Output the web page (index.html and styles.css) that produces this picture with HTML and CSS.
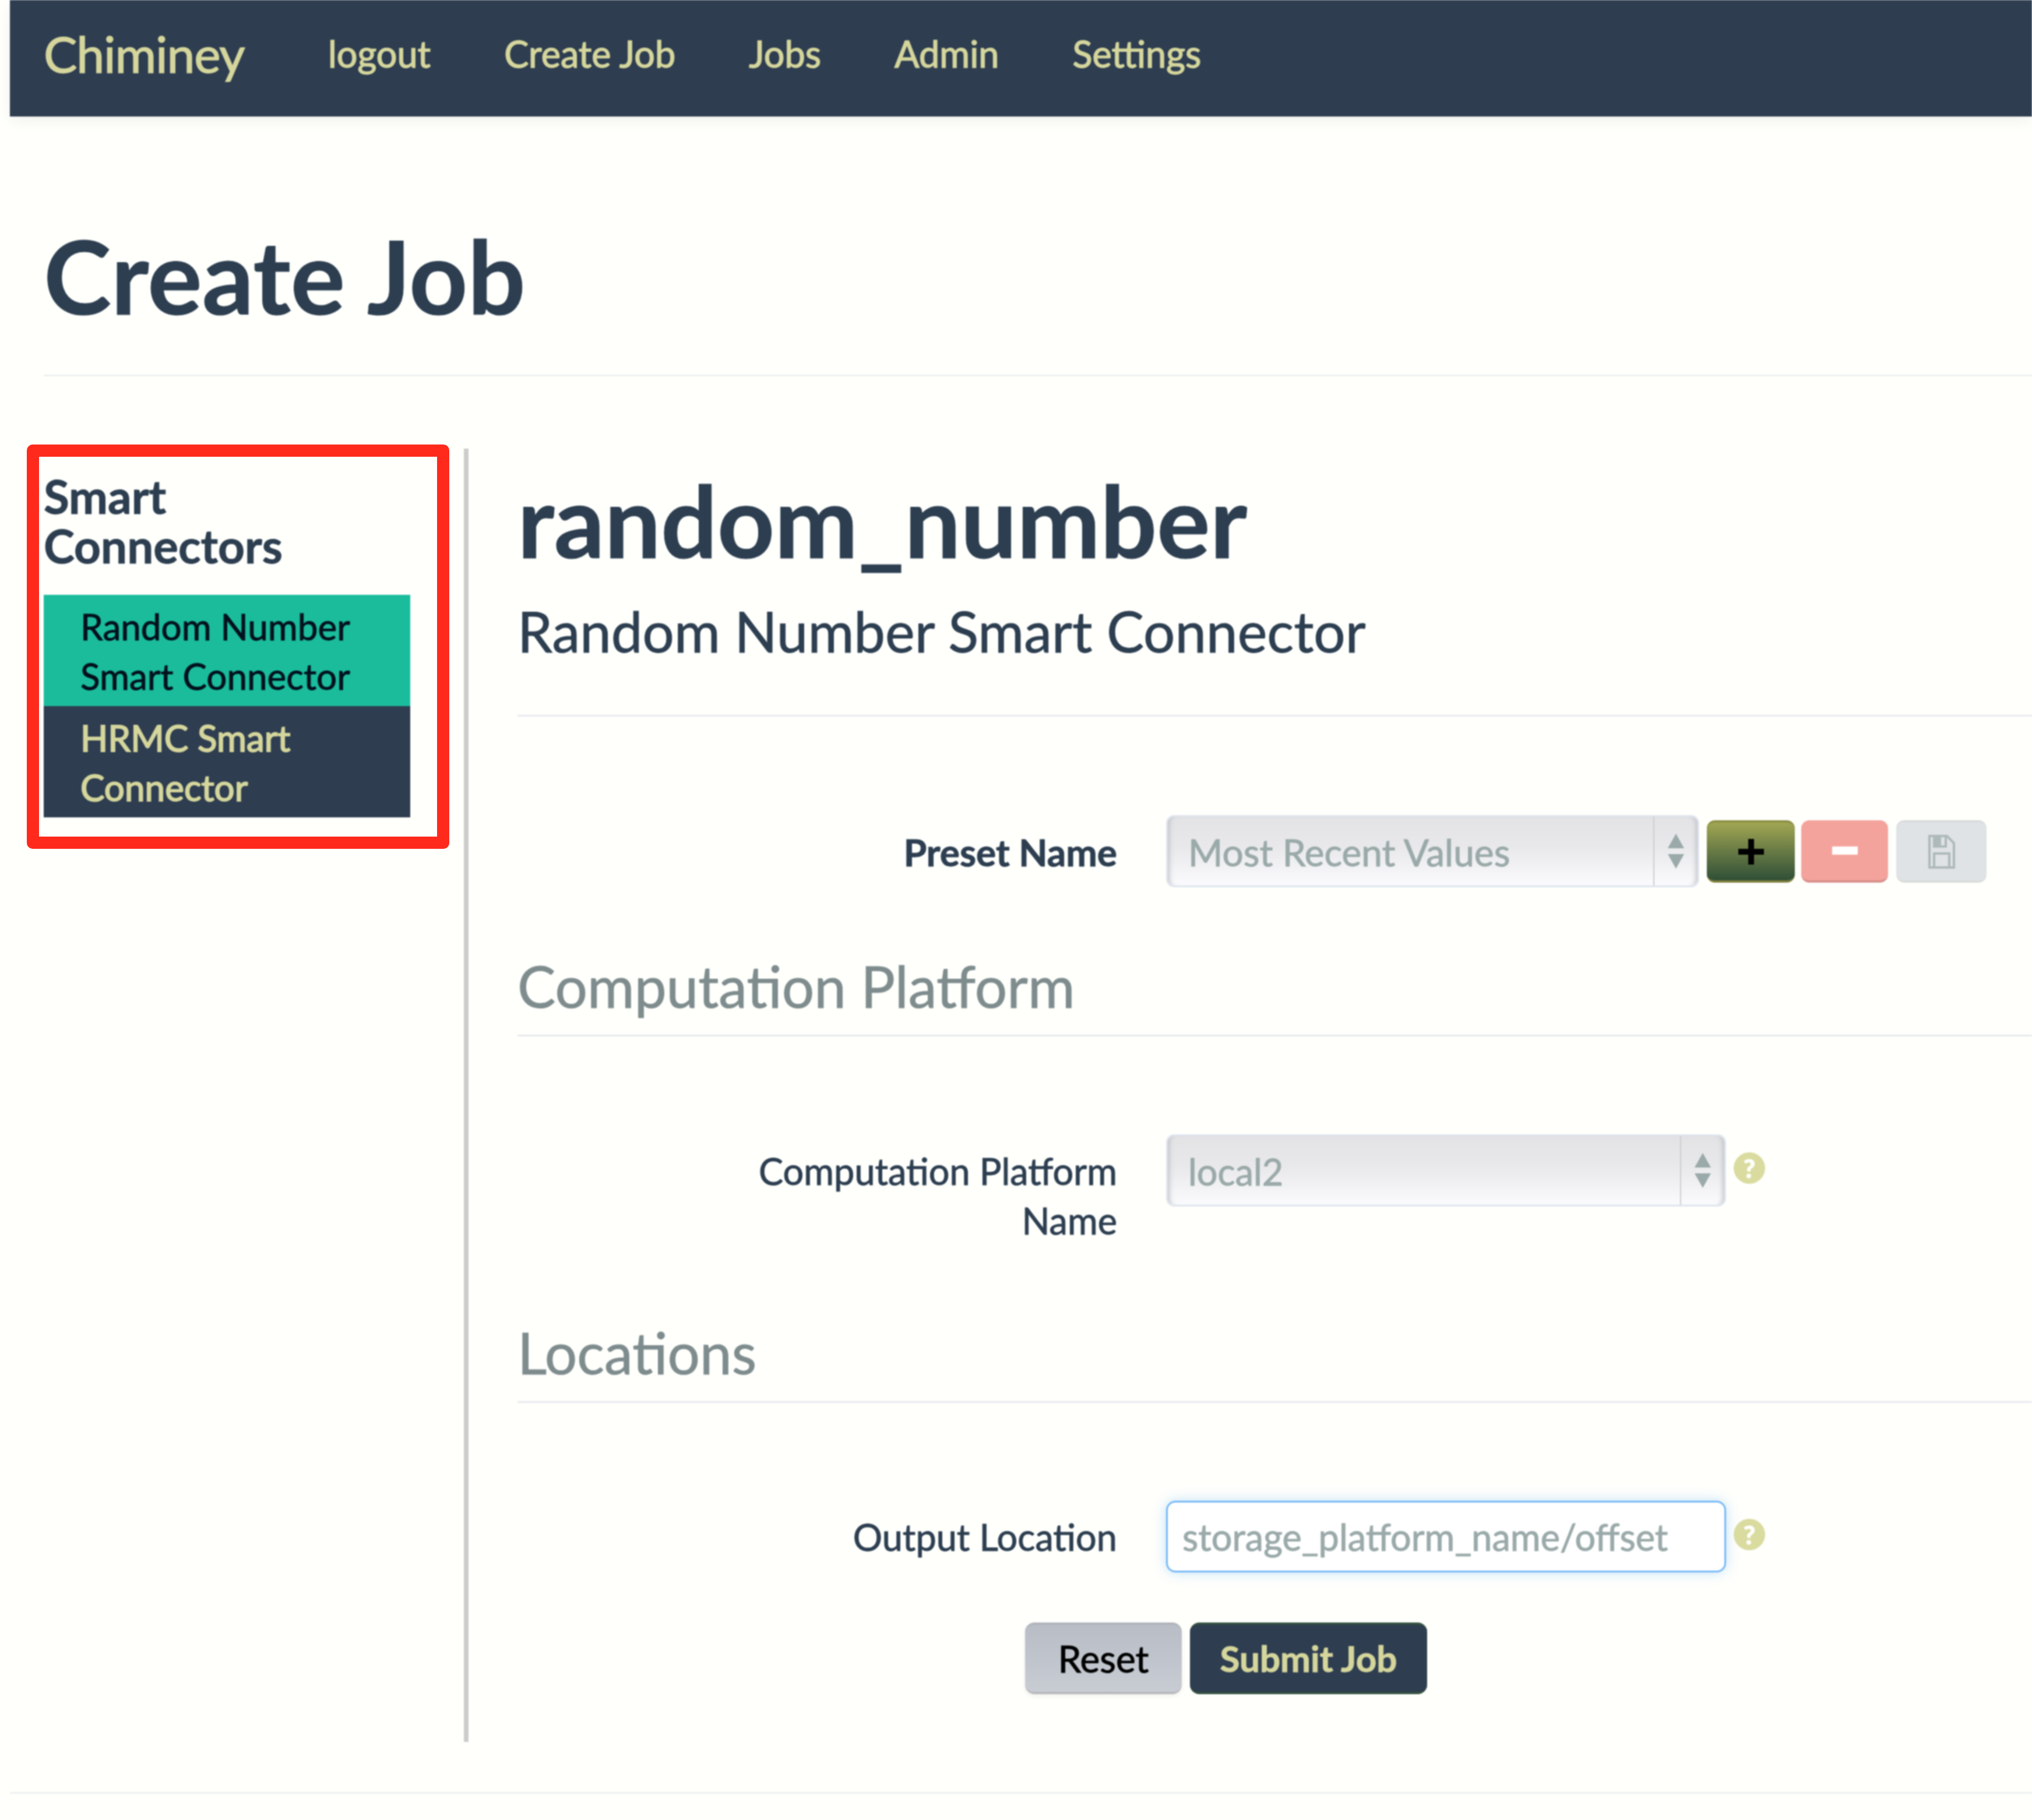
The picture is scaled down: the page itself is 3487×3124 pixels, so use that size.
FILE: index.html
```html
<!DOCTYPE html>
<html lang="en">
<head>
    <meta charset="UTF-8">
    <title>Chiminey - Create Job</title>
    <link rel="stylesheet" href="styles.css">
</head>
<body>
    <div class="wrapper">
        <nav class="navbar">
            <a class="brand">Chiminey</a>
            <a class="nav-link">logout</a>
            <a class="nav-link">Create Job</a>
            <a class="nav-link">Jobs</a>
            <a class="nav-link">Admin</a>
            <a class="nav-link">Settings</a>
        </nav>
        <div class="page-header">
            <h1>Create Job</h1>
        </div>
        <div class="columns">
            <aside class="sidebar">
                <h4>Smart Connectors</h4>
                <ul class="menu">
                    <li class="active">Random Number Smart Connector</li>
                    <li>HRMC Smart Connector</li>
                </ul>
            </aside>
            <main class="content">
                <div class="job-header">
                    <h1 class="job-name">random_number</h1>
                    <h2 class="job-desc">Random Number Smart Connector</h2>
                </div>
                <div class="row preset-row">
                    <label class="bold">Preset Name</label>
                    <div class="select select-preset">
                        <span class="select-value">Most Recent Values</span>
                        <span class="select-arrows">
                            <svg width="28" height="60" viewBox="0 0 28 60"><path d="M14 0L28 25H0ZM14 60L0 35H28Z" fill="#9aa9a9"/></svg>
                        </span>
                    </div>
                    <button class="icon-btn btn-add">
                        <svg width="44" height="44" viewBox="0 0 44 44"><path d="M17 0H27V17H44V27H27V44H17V27H0V17H17Z" fill="#000"/></svg>
                    </button>
                    <button class="icon-btn btn-remove">
                        <svg width="44" height="14" viewBox="0 0 44 14"><rect width="44" height="14" fill="#fff"/></svg>
                    </button>
                    <button class="icon-btn btn-save">
                        <svg width="46" height="58" viewBox="0 0 46 58"><path d="M2 2H32L44 14V56H2ZM10 2V20H30V2M10 56V32H36V56" fill="none" stroke="#aeb9b9" stroke-width="4"/><rect x="12" y="4" width="10" height="14" fill="#aeb9b9"/></svg>
                    </button>
                </div>
                <h3>Computation Platform</h3>
                <div class="row platform-row">
                    <label>Computation Platform Name</label>
                    <div class="select select-platform">
                        <span class="select-value">local2</span>
                        <span class="select-arrows">
                            <svg width="28" height="60" viewBox="0 0 28 60"><path d="M14 0L28 25H0ZM14 60L0 35H28Z" fill="#9aa9a9"/></svg>
                        </span>
                    </div>
                    <span class="help">?</span>
                </div>
                <h3 class="locations">Locations</h3>
                <div class="row location-row">
                    <label>Output Location</label>
                    <div class="text-input">storage_platform_name/offset</div>
                    <span class="help">?</span>
                </div>
                <div class="actions">
                    <button class="btn btn-reset">Reset</button>
                    <button class="btn btn-submit">Submit Job</button>
                </div>
            </main>
        </div>
        <div class="footer-line"></div>
    </div>
    <div class="highlight"></div>
</body>
</html>
```

FILE: styles.css
```css
html, body {
    margin: 0;
    padding: 0;
}
body {
    width: 3487px;
    height: 3124px;
    overflow: hidden;
    position: relative;
    background: #fffffc;
    font-family: 'Lato', sans-serif;
    font-size: 63px;
    line-height: 85px;
    color: #2c3e50;
    -webkit-text-stroke: 1px currentColor;
}
.wrapper {
    padding-left: 17px;
    filter: blur(0.8px);
}
.navbar {
    display: flex;
    align-items: center;
    box-sizing: border-box;
    height: 200px;
    padding-left: 58px;
    padding-bottom: 18px;
    background: #2e3d50;
    box-shadow: 0 8px 24px rgba(0, 0, 0, 0.06);
    color: #d5d69c;
    -webkit-text-stroke: 1.5px currentColor;
}
.brand {
    font-size: 86px;
    letter-spacing: -1.2px;
    width: 488px;
}
.nav-link {
    margin-right: 126px;
}
.page-header {
    margin-left: 58px;
    padding-bottom: 71px;
    border-bottom: 3px solid #ecf0f1;
}
.page-header h1 {
    margin: 172px 0 0;
    font-size: 175px;
    line-height: 200px;
    font-weight: 700;
}
.columns {
    display: flex;
    margin-top: 124px;
    margin-left: 58px;
    height: 2220px;
}
.sidebar {
    width: 721px;
    flex-shrink: 0;
    border-right: 8px solid #cccccc;
}
.sidebar h4 {
    width: 500px;
    margin: 39px 0 42px;
    font-size: 80px;
    line-height: 85px;
    font-weight: 700;
}
.menu {
    list-style: none;
    margin: 0;
    padding: 0;
    width: 629px;
    font-size: 62px;
}
.menu li {
    height: 170px;
    padding: 12px 60px 9px 63px;
    background: #2e3d50;
    color: #d5d69c;
    -webkit-text-stroke: 2px currentColor;
}
.menu li.active {
    background: #1abc9c;
    color: #00101c;
    -webkit-text-stroke: 1px currentColor;
}
.content {
    flex: 1;
    padding-left: 84px;
}
.job-header {
    padding-top: 22px;
    border-bottom: 3px solid #e6e9ee;
    height: 435px;
}
.job-name {
    margin: 0;
    font-size: 171px;
    line-height: 200px;
}
.job-desc {
    margin: 31px 0 0;
    font-size: 96px;
    line-height: 120px;
    font-weight: 400;
}
.row {
    display: flex;
    align-items: flex-start;
}
.row label {
    width: 720px;
    margin-left: 309px;
    margin-right: 84px;
    text-align: right;
    flex-shrink: 0;
}
.row .bold {
    font-weight: 700;
    font-size: 64px;
}
.preset-row {
    margin-top: 169px;
}
.preset-row label {
    line-height: 128px;
}
.platform-row {
    margin-top: 168px;
}
.platform-row label {
    padding-top: 20px;
}
.location-row {
    margin-top: 168px;
}
.location-row label {
    line-height: 123px;
}
.select {
    display: flex;
    box-sizing: border-box;
    height: 124px;
    border: 3px solid #e0e6ef;
    border-radius: 14px;
    background: linear-gradient(#e3e3e5, #e9e9eb 45%, #fbfbfd);
    box-shadow: inset 10px 0 10px -8px #b9bcc2, inset -10px 0 10px -8px #b9bcc2;
    color: #9aa9a9;
}
.select-preset {
    width: 915px;
}
.select-preset .select-value {
    font-size: 64px;
}
.select-platform {
    width: 961px;
}
.select-value {
    flex: 1;
    padding-left: 35px;
    line-height: 122px;
}
.select-arrows {
    display: flex;
    align-items: center;
    justify-content: center;
    width: 74px;
    border-left: 2px solid #c8cccc;
}
.icon-btn {
    display: flex;
    align-items: center;
    justify-content: center;
    box-sizing: border-box;
    height: 107px;
    margin-top: 9px;
    padding: 0;
    border: 0;
    border-radius: 14px;
}
.btn-add {
    width: 151px;
    margin-left: 13px;
    background: linear-gradient(#a1a653, #2f4f37);
    border-top: 4px solid #8c8f43;
    border-bottom: 4px solid #7c7f3c;
}
.btn-remove {
    width: 149px;
    margin-left: 11px;
    background: #f4a39c;
    border-bottom: 4px solid #d78f89;
}
.btn-save {
    width: 155px;
    margin-left: 14px;
    background: #dfe3e5;
    border-top: 3px solid #d5d9d9;
    border-bottom: 3px solid #d9dad8;
}
h3 {
    margin: 0;
    padding-bottom: 24px;
    font-size: 98px;
    line-height: 120px;
    font-weight: 400;
    color: #7e8c8d;
    border-bottom: 3px solid #e6e9ee;
}
.preset-row + h3 {
    margin-top: 105px;
}
.locations {
    margin-top: 124px;
}
.help {
    display: flex;
    align-items: center;
    justify-content: center;
    width: 54px;
    height: 54px;
    margin: 31px 0 0 13px;
    border-radius: 50%;
    background: #d9db9f;
    color: #fffffc;
    font-size: 44px;
    line-height: 54px;
    font-weight: 900;
}
.text-input {
    box-sizing: border-box;
    width: 961px;
    height: 123px;
    padding-left: 25px;
    border: 3px solid #74b8f5;
    border-radius: 16px;
    background: #fff;
    box-shadow: 0 0 22px rgba(100, 180, 245, 0.4);
    color: #9aa9a9;
    line-height: 117px;
}
.actions {
    display: flex;
    margin-top: 86px;
    margin-left: 871px;
}
.btn {
    box-sizing: border-box;
    height: 123px;
    padding: 0;
    border-radius: 16px;
    font-family: inherit;
    font-size: 64px;
    line-height: 115px;
}
.btn-reset {
    width: 269px;
    background: linear-gradient(#b8bdc6, #c8ccd3);
    border: 0;
    border-top: 4px solid #b0b4bb;
    border-bottom: 4px solid #b8babd;
    color: #000;
    box-shadow: 0 4px 8px rgba(0, 0, 0, 0.06);
}
.btn-submit {
    width: 407px;
    margin-left: 14px;
    background: #2e3d50;
    border: 0;
    border-top: 4px solid #34503f;
    border-bottom: 4px solid #34503f;
    color: #d5d69c;
    font-size: 62px;
    font-weight: 700;
}
.footer-line {
    margin-top: 86px;
    border-top: 3px solid #eef0f1;
}
.highlight {
    position: absolute;
    left: 46px;
    top: 763px;
    width: 725px;
    height: 694px;
    box-sizing: border-box;
    border: 21px solid #ff2a1c;
    border-radius: 10px;
}
```
